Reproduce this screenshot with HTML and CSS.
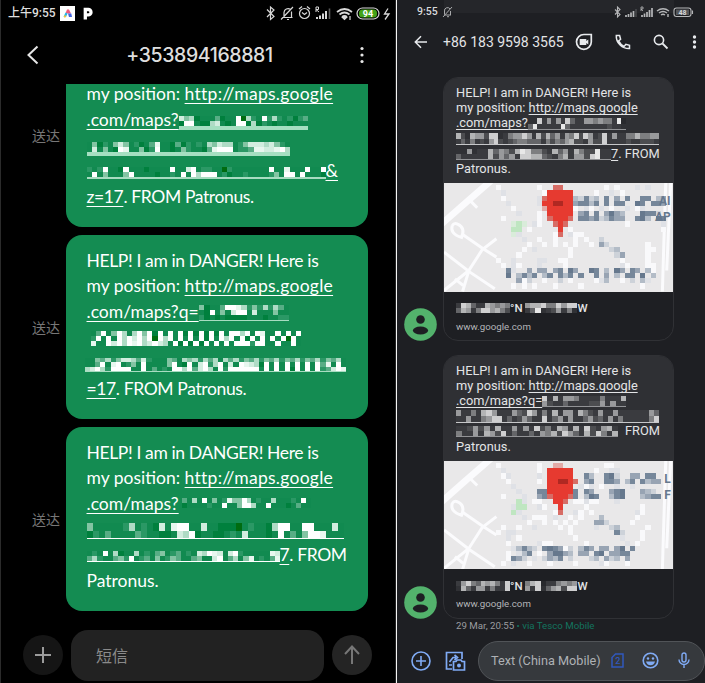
FILE: index.html
```html
<!DOCTYPE html>
<html lang="en">
<head>
<meta charset="utf-8">
<title>Messages</title>
<link rel="stylesheet" href="styles.css">
</head>
<body>
<main class="screens">
<section class="phone left">
  <header class="status">
    <span class="clock">上午9:55</span>
    <svg class="app" width="15" height="15" viewBox="0 0 15 15"><rect width="15" height="15" fill="#fff"/><path d="M7 3.500h2l2 4H5.500z" fill="#ef5b7c"/><path d="M5.500 6.500l2 1-1.500 3.500H3.500z" fill="#25b8ea"/><path d="M8 7.500h3.300l.7 3.500H9z" fill="#4264df"/><path d="M4 9.500h2.500l-1 2H4z" fill="#f4c53a"/></svg>
    <svg class="parking" width="10" height="13" viewBox="0 0 10 13"><path d="M2.300 12.500V2.500h3a2.700 2.700 0 0 1 0 5.400H3" fill="none" stroke="#fff" stroke-width="3.300"/></svg>
    <span class="grow"></span>
    <svg width="125" height="18" viewBox="0 0 125 18" fill="none" stroke="#d8d8d8" stroke-width="1.200">
      <path d="M1 5.500l7 7-3.500 3V3l3.500 3-7 7"/>
      <path d="M17 13.500h9.500M18 13V8.500a4 4 0 0 1 6.500-3M25.500 7.500v6M15 15.500L27 3M21 15.500h2"/>
      <circle cx="38.500" cy="9.500" r="5"/><path d="M36 8.500l2.500 2 2.500-2M33 5l3-2.500M44 5l-3-2.500"/>
      <path d="M50 8V3h2.500v2.500H50l3 2.500" stroke-width="1"/>
      <path d="M51 13v2M54 11.500v3.500M57 9.500v5.500M60 7v8" stroke-width="2"/><path d="M63.500 4.500v10.500" stroke="#5c5c5c" stroke-width="1.600"/>
      <path d="M71 8q7.500-6 15 0M73.500 10.500q5-4 10 0M76 13q2.500-2 5 0" stroke-width="1.700"/><path d="M76.500 13.500h4l-2 2z" fill="#d8d8d8"/><path d="M84 12v4" />
      <rect x="91" y="4" width="22" height="11" rx="5.500"/><rect x="93" y="5.500" width="18" height="8" rx="3.500" fill="#43a317" stroke="none"/>
      <path d="M122 4.500l-3.500 5.500h4.500l-4 5.500" stroke-width="1.300"/>
      <text x="102" y="12.800" text-anchor="middle" class="battery">94</text>
    </svg>
  </header>
  <div class="titlebar">
    <svg width="14" height="20" viewBox="0 0 14 20"><path d="M11.500 1.500L2.500 10l9 8.500" fill="none" stroke="#e6e6e6" stroke-width="2"/></svg>
    <h1>+353894168881</h1>
    <svg width="6" height="20" viewBox="0 0 6 20" fill="#e6e6e6"><circle cx="3" cy="3.500" r="1.600"/><circle cx="3" cy="10" r="1.600"/><circle cx="3" cy="16.500" r="1.600"/></svg>
  </div>
  <div class="chat">
    <div class="row first">
      <span class="sent">送达</span>
      <div class="bubble">
        <p>my position: <u class="url">http://maps.google</u></p>
        <p><u>.com/maps?</u><i class="mosaic bar mint" data-w="129" data-h="10" data-rows="7561222412290632936323134|1992116721299161321221222"></i></p>
        <p><i class="mosaic bar" data-w="203" data-h="10" data-rows="251325752312482214132326576623577767532|272521982251392212532214899923348877896"></i></p>
        <p><i class="mosaic line" data-w="239" data-h="10" data-rows="3239221922212222922792332203222222292282229229|2925222592222122329296999231223222235299292221"></i><u>&amp;</u></p>
        <p class="snug"><u>z=17</u>. FROM Patronus.</p>
      </div>
    </div>
    <div class="row">
      <span class="sent">送达</span>
      <div class="bubble">
        <p class="snug">HELP! I am in DANGER! Here is</p>
        <p>my position: <u class="url">http://maps.google</u></p>
        <p><u>.com/maps?q=</u><i class="mosaic line thin" data-w="90" data-h="15" data-rows="51224998635363642|21925279927222522|31212111122212233"></i></p>
        <p><i class="mosaic tall indent" data-w="210" data-h="15" data-rows="24925962695919292919191919299692982292929|39292969796909692929291929692919292929092|82297969896797629191919292929993992292292"></i></p>
        <p><i class="mosaic line thin wide" data-w="261" data-h="13" data-rows="225463577647322254265636462646354635463546354635462|224928923529222259219279369272987619292929292948292|679639999229242329969479629399999929292919292934798"></i></p>
        <p class="snug"><u>=17</u>. FROM Patronus.</p>
      </div>
    </div>
    <div class="row">
      <span class="sent">送达</span>
      <div class="bubble">
        <p class="snug">HELP! I am in DANGER! Here is</p>
        <p>my position: <u class="url">http://maps.google</u></p>
        <p><u>.com/maps?</u><i class="mosaic gap" data-w="129" data-h="10" data-rows="42629252385596232262223292|12222322922599622922212422"></i></p>
        <p><i class="mosaic tall line solid" data-w="257" data-h="15" data-rows="5222223623217289922722111023221699229922272|1324222243221127691221123272221292425998222190"></i></p>
        <p class="snug"><i class="mosaic line solid" data-w="193" data-h="10" data-rows="2329261226232452342327698727932222287|4632245392342523542245227924625823248"></i><u class="seven">7</u>. FROM</p>
        <p>Patronus.</p>
      </div>
    </div>
  </div>
  <footer class="composer">
    <span class="round"><svg width="18" height="18" viewBox="0 0 18 18"><path d="M9 1v16M1 9h16" stroke="#9b9b9b" stroke-width="2" fill="none"/></svg></span>
    <span class="field">短信</span>
    <span class="round send"><svg width="18" height="20" viewBox="0 0 18 20"><path d="M9 19V2M2 9l7-7.500L16 9" stroke="#777" stroke-width="2" fill="none"/></svg></span>
  </footer>
</section>
<section class="phone right">
  <header class="status">
    <span class="clock">9:55</span>
    <svg width="12" height="12" viewBox="0 0 12 12" fill="none" stroke="#a8a9ab" stroke-width="1"><path d="M2 9h7M2.500 8.500V5A3 3 0 0 1 8 3M8.500 5v4M1 11L10 1M5 10.700h2"/></svg>
    <span class="grow"></span>
    <svg width="82" height="14" viewBox="0 0 82 14" fill="none" stroke="#b6b7b9" stroke-width="1.100">
      <path d="M1 4.500l5 5-2.500 2.500V2L6 4.500l-5 5"/>
      <path d="M12 10v2M14.500 9v3M17 7.500v4.500M19.500 6v6" stroke-width="1.700"/><path d="M22 4v8" stroke="#58595c"/>
      <path d="M27 6V2h2v2h-2l2 2" stroke-width=".8"/><path d="M28 10v2M30.500 8.500v3.500M33 7v5M35.500 5v7M38 3v9" stroke-width="1.700"/>
      <path d="M43 6q6-4.500 12 0M45 8q4-3 8 0M47 10q2-1.500 4 0M54 9v3" stroke-width="1.400"/>
      <rect x="60" y="3" width="17" height="8.500" rx="2.500"/><path d="M78.500 5.500v3.500"/><rect x="62" y="4.500" width="13" height="5.500" fill="#55575a" stroke="none"/>
      <text x="68.500" y="9.800" text-anchor="middle" class="battery small">48</text>
    </svg>
  </header>
  <div class="titlebar">
    <svg width="14" height="14" viewBox="0 0 14 14" fill="none" stroke="#e8eaed" stroke-width="1.500"><path d="M13 7H1.500M7 1.200L1.300 7 7 12.800"/></svg>
    <h1>+86 183 9598 3565</h1>
    <svg class="video" width="18" height="18" viewBox="0 0 18 18"><path d="M9 1.500h7.300V9A7.400 7.400 0 1 1 9 1.500z" fill="none" stroke="#e8eaed" stroke-width="1.700"/><path d="M4.700 6h6.600v2l2-1.500v5l-2-1.500v2H4.700z" fill="#e8eaed"/></svg>
    <svg class="call" width="16" height="16" viewBox="0 0 16 16"><path d="M1.300 1.500h3.300l1 3.700-2 1.700q1.800 3.800 5.500 5.500l1.700-2 3.700 1v3.200C7.500 15 .8 9 1.300 1.500z" fill="none" stroke="#e8eaed" stroke-width="1.500"/></svg>
    <svg class="search" width="16" height="16" viewBox="0 0 16 16"><circle cx="6" cy="6" r="4.600" fill="none" stroke="#e8eaed" stroke-width="1.600"/><path d="M9.500 9.500l5 5" stroke="#e8eaed" stroke-width="1.800"/></svg>
    <svg class="more" width="5" height="16" viewBox="0 0 5 16" fill="#e8eaed"><circle cx="2.500" cy="3" r="1.700"/><circle cx="2.500" cy="8" r="1.700"/><circle cx="2.500" cy="13" r="1.700"/></svg>
  </div>
  <div class="thread">
    <article class="message">
      <svg class="avatar" width="33" height="33" viewBox="0 0 33 33"><circle cx="16.500" cy="16.500" r="16.300" fill="#53b26c"/><circle cx="16.500" cy="11.500" r="4.300" fill="#1e1f23"/><ellipse cx="16.500" cy="22.500" rx="7.600" ry="4" fill="#1e1f23"/></svg>
      <div class="card">
        <div class="body">
          <p>HELP! I am in DANGER! Here is</p>
          <p>my position: <u>http://maps.google</u></p>
          <p><u>.com/maps?</u><i class="mosaic gray line" data-w="98" data-h="11" data-rows="118262628422665655290|492222294222222223221"></i></p>
          <p><i class="mosaic gray line solid" data-w="203" data-h="11" data-rows="7317663881256686273746265838623826225575566|2425232683234554442535467332633822223223332"></i></p>
          <p><i class="mosaic gray line" data-w="155" data-h="10" data-rows="11612274653798553274627533922|42222273646288774325726638922"></i><u>7</u>. FROM</p>
          <p>Patronus.</p>
        </div>
        <svg class="map" viewBox="147 38 690 325" preserveAspectRatio="none" data-top="44.500" data-map="w.......w..ss........w.w...l.l....|.l.......wrrrrr....w..l.w........|.w......lsrrrrr21412.4.3.4..44.23|..l.....lrrkkrr34424.4.44..54.443|...w.....prrrrrw.lw.l.w..l.wl....|....l...w.rrrrr.34.4.3532...5441.|.w......w.srrrs.443412433..452.54|...hgh.lw..srs...........w......l|...gg.w.....r.w.................w|...hl......ws.lww...............|.....l..w..w...w.w..1............|......w..w.w.w.w..w.31.......w..|.....w.l......w.......12.....ww..|....w.........w........13....w...|w..l....ll..ww..........w....w...|.w.lw...l....w..........lw...ww..|..4l..3.33.34.53..54.2.53.43.2w..|..5.2424.24.424.4..4.3.2.44.5.2..|....3w1..w..1.w....wl2..w.1.2l...|...w.w.w...w....w...........w...."><text x="795" y="105">AI</text><text x="783" y="153">AP</text></svg>
        <div class="link">
          <strong><i class="mosaic gray title" data-w="54" data-h="10" data-rows="28742276565|47625886753"></i>°N <i class="mosaic gray title" data-w="52" data-h="10" data-rows="6778558688|2491236251"></i>W</strong>
          <span>www.google.com</span>
        </div>
      </div>
    </article>
    <article class="message">
      <svg class="avatar" width="33" height="33" viewBox="0 0 33 33"><circle cx="16.500" cy="16.500" r="16.300" fill="#53b26c"/><circle cx="16.500" cy="11.500" r="4.300" fill="#1e1f23"/><ellipse cx="16.500" cy="22.500" rx="7.600" ry="4" fill="#1e1f23"/></svg>
      <div class="card">
        <div class="body">
          <p>HELP! I am in DANGER! Here is</p>
          <p>my position: <u>http://maps.google</u></p>
          <p><u>.com/maps?q=</u><i class="mosaic gray line" data-w="84" data-h="10" data-rows="8272665222252227|6322422223362622"></i></p>
          <p><i class="mosaic gray line solid" data-w="203" data-h="12" data-rows="6225278622264386252726627532622622222264|2262256882423642282462622463426252222258"></i></p>
          <p><i class="mosaic gray line" data-w="162" data-h="10" data-rows="22363627226262835276272832672|5226276382422426573864273852788"></i><span class="from">FROM</span></p>
          <p>Patronus.</p>
        </div>
        <svg class="map" viewBox="147 30 690 325" preserveAspectRatio="none" data-top="36" data-map="w.......w..pp........ww.........|.l......w.rrrrr....w..ll........|.wl.....l.rrrrr..42..451..33.44.|..w.....w.rrkkrs.34..443.24.4233|...l......rrrrr.lwl.w..l..l.....|....l...44rrrrr4.43...345...321.|.w...l..34srrrs4.254..245...2344|....gl.ww..rrs.wwlww...l........|...lgg..lw..r....w..........w...|...gl......ws..lw.w........lw...|.....l.www.l..w.w...2......w....|......w..w.w.w.w...331....w....|.w..w..l....w.w....l..12.....w..|w.ll..........w........41...w...|..l.w..........w........l...w...|..w.....lww......w.......l.w....|...l2421.4543w1.243.33.35.4.....|..w.l24.w.35532.33.45.3344......|..w431.l.1324.1...12.312.3......|.w.l..w...w....w....lw...w......"><text x="811" y="97">L</text><text x="811" y="145">F</text></svg>
        <div class="link">
          <strong><i class="mosaic gray title" data-w="54" data-h="10" data-rows="26854767528|17426625228"></i>°N <i class="mosaic gray title" data-w="52" data-h="10" data-rows="5780225656|6281467388"></i>W</strong>
          <span>www.google.com</span>
        </div>
      </div>
    </article>
    <p class="meta">29 Mar, 20:55 <b>• via Tesco Mobile</b></p>
  </div>
  <footer class="composer">
    <svg width="20" height="20" viewBox="0 0 20 20" fill="none" stroke="#80abf5" stroke-width="1.600"><circle cx="10" cy="10" r="9"/><path d="M10 5v10M5 10h10"/></svg>
    <svg class="gallery" width="21" height="20" viewBox="0 0 21 20" fill="none" stroke="#80abf5" stroke-width="1.700"><path d="M7 18H1.500V1.500H17V8M4 14h3M4.500 11L8 6.500h3M9.500 4l3 2.500-3 2.500"/><path d="M8.500 10.500h2.500l1-1.500h4l1 1.500h2.500V19h-11z"/><circle cx="14" cy="14.500" r="2" fill="#80abf5" stroke="none"/></svg>
    <div class="field">
      <span>Text (China Mobile)</span>
      <svg class="sim" width="13" height="15" viewBox="0 0 13 15"><path d="M4.500 1H12v13H1V4.500z" fill="none" stroke="#3158bd" stroke-width="1.500"/><text x="6.700" y="11">2</text></svg>
      <svg class="smile" width="17" height="17" viewBox="0 0 17 17"><circle cx="8.500" cy="8.500" r="7.300" fill="none" stroke="#80abf5" stroke-width="1.600"/><circle cx="6" cy="6.500" r="1.200" fill="#80abf5"/><circle cx="11" cy="6.500" r="1.200" fill="#80abf5"/><path d="M4 9.500h9a4.600 4.600 0 0 1-9 0z" fill="#80abf5"/></svg>
      <svg class="mic" width="12" height="17" viewBox="0 0 12 17" fill="none" stroke="#80abf5" stroke-width="1.400"><rect x="4" y="1" width="4" height="9" rx="2"/><path d="M1 7.500a5 5 0 0 0 10 0M6 12.500V16"/></svg>
    </div>
  </footer>
</section>
</main>
<script src="pixels.js"></script>
</body>
</html>
```
FILE: styles.css
```css
* { box-sizing: border-box; }
body { margin: 0; background: #000; }
.screens { display: flex; width: 705px; height: 683px; overflow: hidden; }
.phone { display: flex; flex-direction: column; flex: none; }
.phone > * { flex: none; }
.phone svg { display: block; flex: none; }
.phone .grow { flex: 1; }
p, h1 { margin: 0; font-weight: 400; }
u { text-decoration-thickness: 1px; text-underline-offset: 3px; text-decoration-skip-ink: none; }

.left { width: 396px; background: #000; border-left: 1px solid #2b2b2b; border-right: 1px solid #242424; font-family: Lato, "Noto Sans CJK SC", sans-serif; color: #fff; }
.left .status { display: flex; align-items: center; height: 26px; padding: 0 4px 0 7px; }
.left .clock { flex: none; width: 52px; font: 500 12px/26px Roboto, "Noto Sans CJK SC", sans-serif; color: #dedede; white-space: nowrap; }
.parking { margin-left: 8px; }
.battery { font: 700 9px Roboto, sans-serif; fill: #fff; stroke: none; }
.battery.small { font-size: 7px; fill: #d4d5d7; }
.left .titlebar { display: flex; align-items: center; justify-content: space-between; height: 58px; padding: 0 30px 0 25px; }
.left h1 { font: 500 19.500px/30px Inter, sans-serif; color: #dedede; letter-spacing: -.4px; }
.chat { display: flex; flex-direction: column; gap: 7.500px; height: 543px; }
.row { display: flex; align-items: center; justify-content: space-between; height: 184.500px; padding: 0 27px 0 31px; flex: none; }
.row.first { height: 143px; }
.row.first .sent { margin-bottom: 41px; }
.sent { font-size: 14px; color: #777; }
.bubble { display: flex; flex-direction: column; justify-content: flex-end; width: 302px; height: 100%; padding: 0 0 18px 20.500px; border-radius: 16px; background: #148c52; }
.first .bubble { border-radius: 0 0 16px 16px; }
.bubble p { display: flex; flex: none; align-items: center; height: 25.600px; font-size: 17.500px; line-height: 25px; white-space: pre; }
.bubble .url { letter-spacing: .27px; }
.bubble .snug { letter-spacing: -.37px; }
.mosaic { display: block; flex: none; }
.line { border-bottom: 2px solid #a8dcc1; margin-top: 4px; }
.line.thin { border-bottom-width: 1px; }
.line.solid { border-bottom: 1px solid #fff; }
.bar { border-bottom: 4.500px solid #a5dfc1; margin-top: 8px; }
.tall { margin-top: 3px; }
.gap { margin-left: 3px; }
.indent { margin-left: 4px; }
.wide { margin-left: -2px; }

.left .composer { display: flex; align-items: center; justify-content: space-between; height: 56px; padding: 0 23px 0 22px; }
.round { display: grid; place-items: center; width: 40px; height: 40px; border-radius: 50%; background: #151515; }
.round.send { background: #242424; }
.left .field { width: 253px; height: 51px; padding-left: 25px; border-radius: 17px; background: #222; color: #8a8a8a; font-size: 16px; line-height: 51px; }

.right { width: 309px; background: #1e1f23; border-left: 1px solid #f4f4f4; color: #e3e4e6; font-family: Roboto, sans-serif; }
.right .status { display: flex; align-items: center; height: 24px; padding: 0 9px 0 20px; background: linear-gradient(#25262a, #25262a) 47px 0 / 230px 13px no-repeat; }
.right .clock { width: 25px; font: 500 10.500px/24px Roboto, sans-serif; color: #d8d9db; }
.right .titlebar { display: flex; align-items: center; height: 36px; padding-left: 17px; }
.right h1 { width: 122px; margin-left: 15px; font-size: 14px; line-height: 20px; white-space: nowrap; }
.video { margin-left: 10px; }
.call { margin-left: 22px; }
.search { margin-left: 22px; }
.more { margin-left: 23px; }
.thread { height: 578.500px; padding-top: 17px; }
.message { display: flex; align-items: flex-end; gap: 6px; padding-left: 7px; margin-bottom: 13.500px; }
.card { width: 231px; height: 264px; border: 1px solid #303135; border-radius: 15px; overflow: hidden; }
.body { height: 105px; padding: 7px 0 0 12px; background: #2f3034; }
.body p { display: flex; align-items: center; height: 15.200px; font-size: 12.800px; line-height: 15px; white-space: pre; }
.body u { text-underline-offset: 2px; }
.gray.line { margin-top: 2px; border-bottom: 1px solid #929396; }
.gray.solid { border-color: #c6c7c9; }
.from { margin-left: 7px; }
.map { width: 229px; height: 108.500px; background: #e9e8e9; }
.map text { font: 700 36px Roboto, sans-serif; fill: #66788d; }
.road { fill: none; stroke: #fbfbfd; stroke-width: 9; }
.link { padding: 8px 12px; }
.link strong { display: flex; align-items: center; height: 17px; font-size: 11.500px; font-weight: 500; white-space: pre; }
.link span { display: block; margin-top: 3px; font-size: 9.700px; line-height: 14px; color: #b4b5b8; }
.right .meta { margin: -14px 0 0 59px; font-size: 9.700px; line-height: 16px; color: #9b9da0; }
.meta b { font-weight: 400; color: #13745f; }
.right .composer { display: flex; align-items: center; height: 44.500px; padding-left: 14px; }
.gallery { margin-left: 14px; }
.right .field { display: flex; align-items: center; width: 228px; height: 40px; margin-left: 12px; padding-left: 12px; border: 1px solid #515458; border-radius: 20px; background: #36393d; }
.right .field span { width: 112px; color: #aeb1b5; font-size: 12.700px; white-space: nowrap; }
.sim { margin-left: 8px; }
.sim text { font: 500 9px Roboto, sans-serif; fill: #3158bd; text-anchor: middle; }
.smile { margin-left: 18px; }
.mic { margin-left: 19px; }
```
FILE: pixels.js
```js
const NS = "http://www.w3.org/2000/svg";
const green = ["#006c10", "#00803d", "#118a50", "#2b9865", "#58ad85", "#83c4a3", "#afdbc5", "#d2eddf", "#e8f7ef", "#ffffff"];
const gray = ["#28292d", "#303135", "#3a3b3f", "#4c4d50", "#646568", "#7d7e80", "#999a9c", "#b3b4b5", "#cfcfd0", "#e8e8e8"];
const map = { w: "#f9f9fb", l: "#dfe1e6", g: "#bfe6c1", h: "#d9ecda", r: "#e63a30", s: "#d76c65", k: "#b02822", p: "#e2aaa7", 1: "#cdd2d9", 2: "#b3bcc7", 3: "#98a4b3", 4: "#76879a", 5: "#66788d" };

function cells(svg, rows, colors, x0, y0, w, h) {
  rows.forEach((row, y) => [...row].forEach((key, x) => {
    if (!colors[key]) return;
    const r = document.createElementNS(NS, "rect");
    r.setAttribute("x", x0 + x * w);
    r.setAttribute("y", y0 + y * h);
    r.setAttribute("width", w);
    r.setAttribute("height", h);
    r.setAttribute("fill", colors[key]);
    r.setAttribute("shape-rendering", "crispEdges");
    svg.insertBefore(r, svg.querySelector("text"));
  }));
}

document.querySelectorAll(".mosaic").forEach(el => {
  const rows = el.dataset.rows.split("|");
  const svg = document.createElementNS(NS, "svg");
  svg.setAttribute("width", el.dataset.w);
  svg.setAttribute("height", el.dataset.h);
  cells(svg, rows, el.classList.contains("gray") ? gray : green, 0, 0, el.dataset.w / rows[0].length, el.dataset.h / rows.length);
  el.append(svg);
});

const roads = ["M135 165L215 95L290 30", "M225 90l22 22", "M147 245L225 305L300 355", "M200 190l65 45 40 25", "M172 165q-8 25 28 36q12-30-12-40q-10-5-16 4", "M305 205L262 238L222 300L203 363", "M222 300l-75 60", "M180 325l25 20", "M815 38L805 363", "M830 38L818 300"];
document.querySelectorAll(".map").forEach(svg => {
  const top = Number(svg.dataset.top);
  roads.forEach((d, i) => {
    const p = document.createElementNS(NS, "path");
    p.setAttribute("d", d);
    p.setAttribute("class", "road");
    p.setAttribute("transform", `translate(0 ${top - 44.5})`);
    if (i === 0) p.setAttribute("style", "stroke-width:20");
    svg.insertBefore(p, svg.querySelector("text"));
  });
  cells(svg, svg.dataset.map.split("|"), map, 303, top, 15.55, 15.5);
});
```
